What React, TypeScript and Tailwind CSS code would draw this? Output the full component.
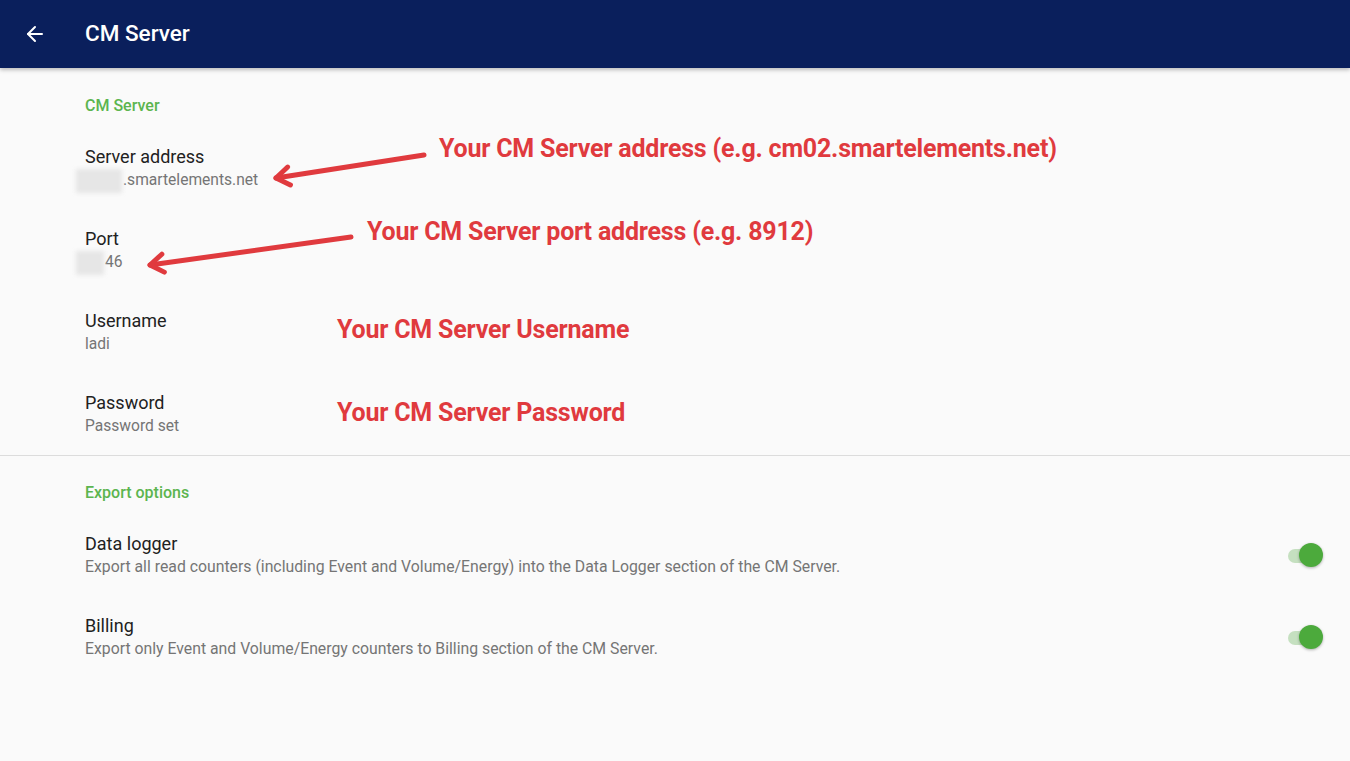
import { ArrowLeft } from 'lucide-react';

const FONT = { fontFamily: 'Roboto, "Noto Sans", sans-serif' };

function Blur({ w }: { w: number }) {
  return (
    <span
      className="inline-block h-[24px] bg-[#e6e6e6] blur-[2px] align-middle -ml-[9px] mr-[1px]"
      style={{ width: w }}
    />
  );
}

function Note({ text, className }: { text: string; className: string }) {
  return (
    <div className={`absolute whitespace-nowrap text-[25px] font-bold leading-[28px] tracking-[-0.2px] text-[#e03a3e] ${className}`}>
      {text}
    </div>
  );
}

function Arrow({ x1, y1, x2, y2 }: { x1: number; y1: number; x2: number; y2: number }) {
  const a = Math.atan2(y1 - y2, x1 - x2);
  const len = 16;
  const spread = 0.6;
  const p1 = [x2 + len * Math.cos(a + spread), y2 + len * Math.sin(a + spread)];
  const p2 = [x2 + len * Math.cos(a - spread), y2 + len * Math.sin(a - spread)];
  return (
    <g stroke="#e03a3e" strokeWidth={5} strokeLinecap="round" strokeLinejoin="round" fill="none">
      <line x1={x1} y1={y1} x2={x2} y2={y2} />
      <polyline points={`${p1[0]},${p1[1]} ${x2},${y2} ${p2[0]},${p2[1]}`} />
    </g>
  );
}

function Item({ title, summary, children }: { title: string; summary: React.ReactNode; children?: React.ReactNode }) {
  return (
    <div className="relative h-[82px] pl-[85px] pt-[13px]">
      <div className="text-[18px] leading-[24px] text-[#212121]">{title}</div>
      <div className="text-[15.6px] leading-[22px] text-[#757575]">{summary}</div>
      {children}
    </div>
  );
}

function Toggle() {
  return (
    <div className="relative h-[24px] w-[36px]">
      <div className="absolute left-[1px] top-[6px] h-[14px] w-[32px] rounded-full bg-[#c5e0c0]" />
      <div className="absolute right-0 top-0 h-[24px] w-[24px] rounded-full bg-[#4caa3c] shadow-[0_1px_3px_rgba(0,0,0,0.3)]" />
    </div>
  );
}

function SwitchItem({ title, summary }: { title: string; summary: string }) {
  return (
    <div className="flex h-[82px] items-center justify-between pl-[85px] pr-[27px]">
      <div>
        <div className="text-[18px] leading-[24px] text-[#212121]">{title}</div>
        <div className="text-[15.8px] leading-[22px] text-[#757575]">{summary}</div>
      </div>
      <Toggle />
    </div>
  );
}

export default function App() {
  return (
    <div className="relative h-[761px] w-[1350px] overflow-hidden bg-[#fafafa]" style={FONT}>
      <header className="flex h-[68px] items-center bg-[#0a1f5c] shadow-[0_2px_4px_rgba(0,0,0,0.25)]">
        <div className="flex w-[85px] justify-center pr-[15px]">
          <ArrowLeft size={24} strokeWidth={2} className="text-white" />
        </div>
        <h1 className="text-[22.5px] font-medium text-white">CM Server</h1>
      </header>

      <div className="pt-[28px]">
        <div className="pl-[85px] text-[16px] font-medium leading-[20px] text-[#5cb54f]">CM Server</div>
        <div className="mt-[16px]">
          <Item title="Server address" summary={<><Blur w={46} />.smartelements.net</>}>
            <Note text="Your CM Server address (e.g. cm02.smartelements.net)" className="left-[439px] top-[3px]" />
          </Item>
          <Item title="Port" summary={<><Blur w={28} />46</>}>
            <Note text="Your CM Server port address (e.g. 8912)" className="left-[367px] top-[4px]" />
          </Item>
          <Item title="Username" summary="ladi">
            <Note text="Your CM Server Username" className="left-[337px] top-[20px]" />
          </Item>
          <Item title="Password" summary="Password set">
            <Note text="Your CM Server Password" className="left-[337px] top-[21px]" />
          </Item>
        </div>
        <div className="mt-[-5px] h-px bg-[#dcdcdc]" />
        <div className="pl-[85px] pt-[27px] text-[16px] font-medium leading-[20px] text-[#5cb54f]">Export options</div>
        <div className="mt-[11px]">
          <SwitchItem
            title="Data logger"
            summary="Export all read counters (including Event and Volume/Energy) into the Data Logger section of the CM Server."
          />
          <SwitchItem
            title="Billing"
            summary="Export only Event and Volume/Energy counters to Billing section of the CM Server."
          />
        </div>
      </div>

      <svg className="pointer-events-none absolute left-0 top-0" width={1350} height={761}>
        <Arrow x1={424} y1={155} x2={276} y2={178} />
        <Arrow x1={351} y1={237} x2={150} y2={265} />
      </svg>
    </div>
  );
}
